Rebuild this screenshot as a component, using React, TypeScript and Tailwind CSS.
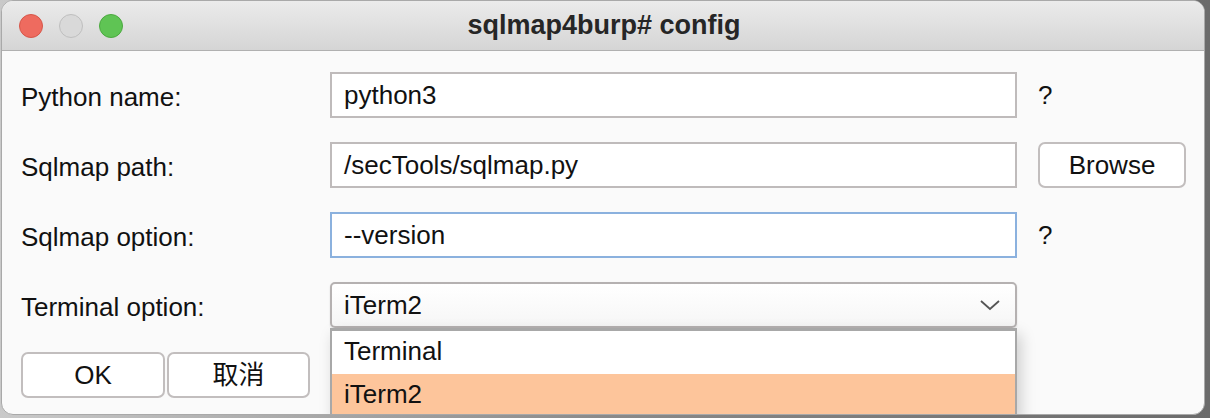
import { ReactNode } from 'react';

const font = { fontFamily: '"Liberation Sans", Arial, "Noto Sans CJK SC", sans-serif' };

function Row({ label, children, extra }: { label: string; children: ReactNode; extra?: ReactNode }) {
  return (
    <div className="flex items-center h-[46px]">
      <div className="w-[309px] text-[26px] text-[#111] leading-none pt-[3px]">{label}</div>
      {children}
      {extra}
    </div>
  );
}

function TextField({ value, focused }: { value: string; focused?: boolean }) {
  return (
    <div
      className={`w-[687px] h-[46px] bg-white flex items-center px-[12px] text-[26px] text-[#111] border-2 ${
        focused ? 'border-[#8bb1de]' : 'border-[#bfbbbb]'
      }`}
    >
      <span className="pt-[1px]">{value}</span>
    </div>
  );
}

function Help() {
  return <div className="ml-[21px] text-[26px] text-[#111] pt-[1px]">?</div>;
}

function Button({ children, className }: { children: ReactNode; className?: string }) {
  return (
    <div
      className={`h-[46px] bg-white border-2 border-[#c2bebe] rounded-[7px] flex items-center justify-center text-[26px] text-[#111] ${className ?? ''}`}
    >
      {children}
    </div>
  );
}

export default function App() {
  return (
    <div className="w-[1210px] h-[418px] bg-gradient-to-r from-[#c9c9c9] via-[#8a8a8a] to-[#6b6b6b]" style={font}>
      <div className="ml-[1px] w-[1204px] h-[415px] rounded-[12px] overflow-hidden bg-[#fafafa] border border-[#a9a9a9] flex flex-col">
        {/* title bar */}
        <div className="relative h-[50px] shrink-0 bg-gradient-to-b from-[#ebebeb] to-[#d5d5d5] border-b border-[#b0b0b0] flex items-center">
          <div className="flex gap-[16px] pl-[17px]">
            <div className="w-[24px] h-[24px] rounded-full bg-[#ee6b5f] border border-[#d65649]" />
            <div className="w-[24px] h-[24px] rounded-full bg-[#d9d9d9] border border-[#bfbfbf]" />
            <div className="w-[24px] h-[24px] rounded-full bg-[#5fc454] border border-[#4ba93f]" />
          </div>
          <div className="absolute inset-0 flex items-center justify-center text-[27px] font-bold text-[#262626] pl-[2px]">
            sqlmap4burp# config
          </div>
        </div>

        {/* form */}
        <div className="flex flex-col gap-[24px] pl-[19px] pt-[21px]">
          <Row label="Python name:" extra={<Help />}>
            <TextField value="python3" />
          </Row>
          <Row label="Sqlmap path:" extra={<Button className="ml-[21px] w-[148px]">Browse</Button>}>
            <TextField value="/secTools/sqlmap.py" />
          </Row>
          <Row label="Sqlmap option:" extra={<Help />}>
            <TextField value="--version" focused />
          </Row>
          <Row label="Terminal option:">
            <div className="relative">
              <div className="w-[687px] h-[46px] rounded-[5px] border-2 border-[#b5b1b1] bg-gradient-to-b from-white to-[#f6f6f6] shadow-[0_1px_2px_rgba(0,0,0,0.12)] flex items-center justify-between pl-[12px] pr-[14px] text-[26px] text-[#111]">
                <span className="pt-[1px]">iTerm2</span>
                <svg width="22" height="12" viewBox="0 0 22 12" fill="none">
                  <polyline points="2,2 11,10 20,2" stroke="#555" strokeWidth="1.8" />
                </svg>
              </div>
              <div className="absolute left-0 top-[46px] w-[687px] z-10 bg-white border-2 border-t-[3px] border-[#a8a8a8] shadow-[4px_6px_14px_rgba(0,0,0,0.18)] text-[26px] text-[#111]">
                <div className="h-[43px] flex items-center pl-[12px] pb-[2px]">Terminal</div>
                <div className="h-[42px] flex items-center pl-[12px] pb-[2px] bg-[#fdc59b]">iTerm2</div>
              </div>
            </div>
          </Row>
          <div className="flex gap-[2px]">
            <Button className="w-[144px]">OK</Button>
            <Button className="w-[143px]">取消</Button>
          </div>
        </div>
      </div>
    </div>
  );
}
